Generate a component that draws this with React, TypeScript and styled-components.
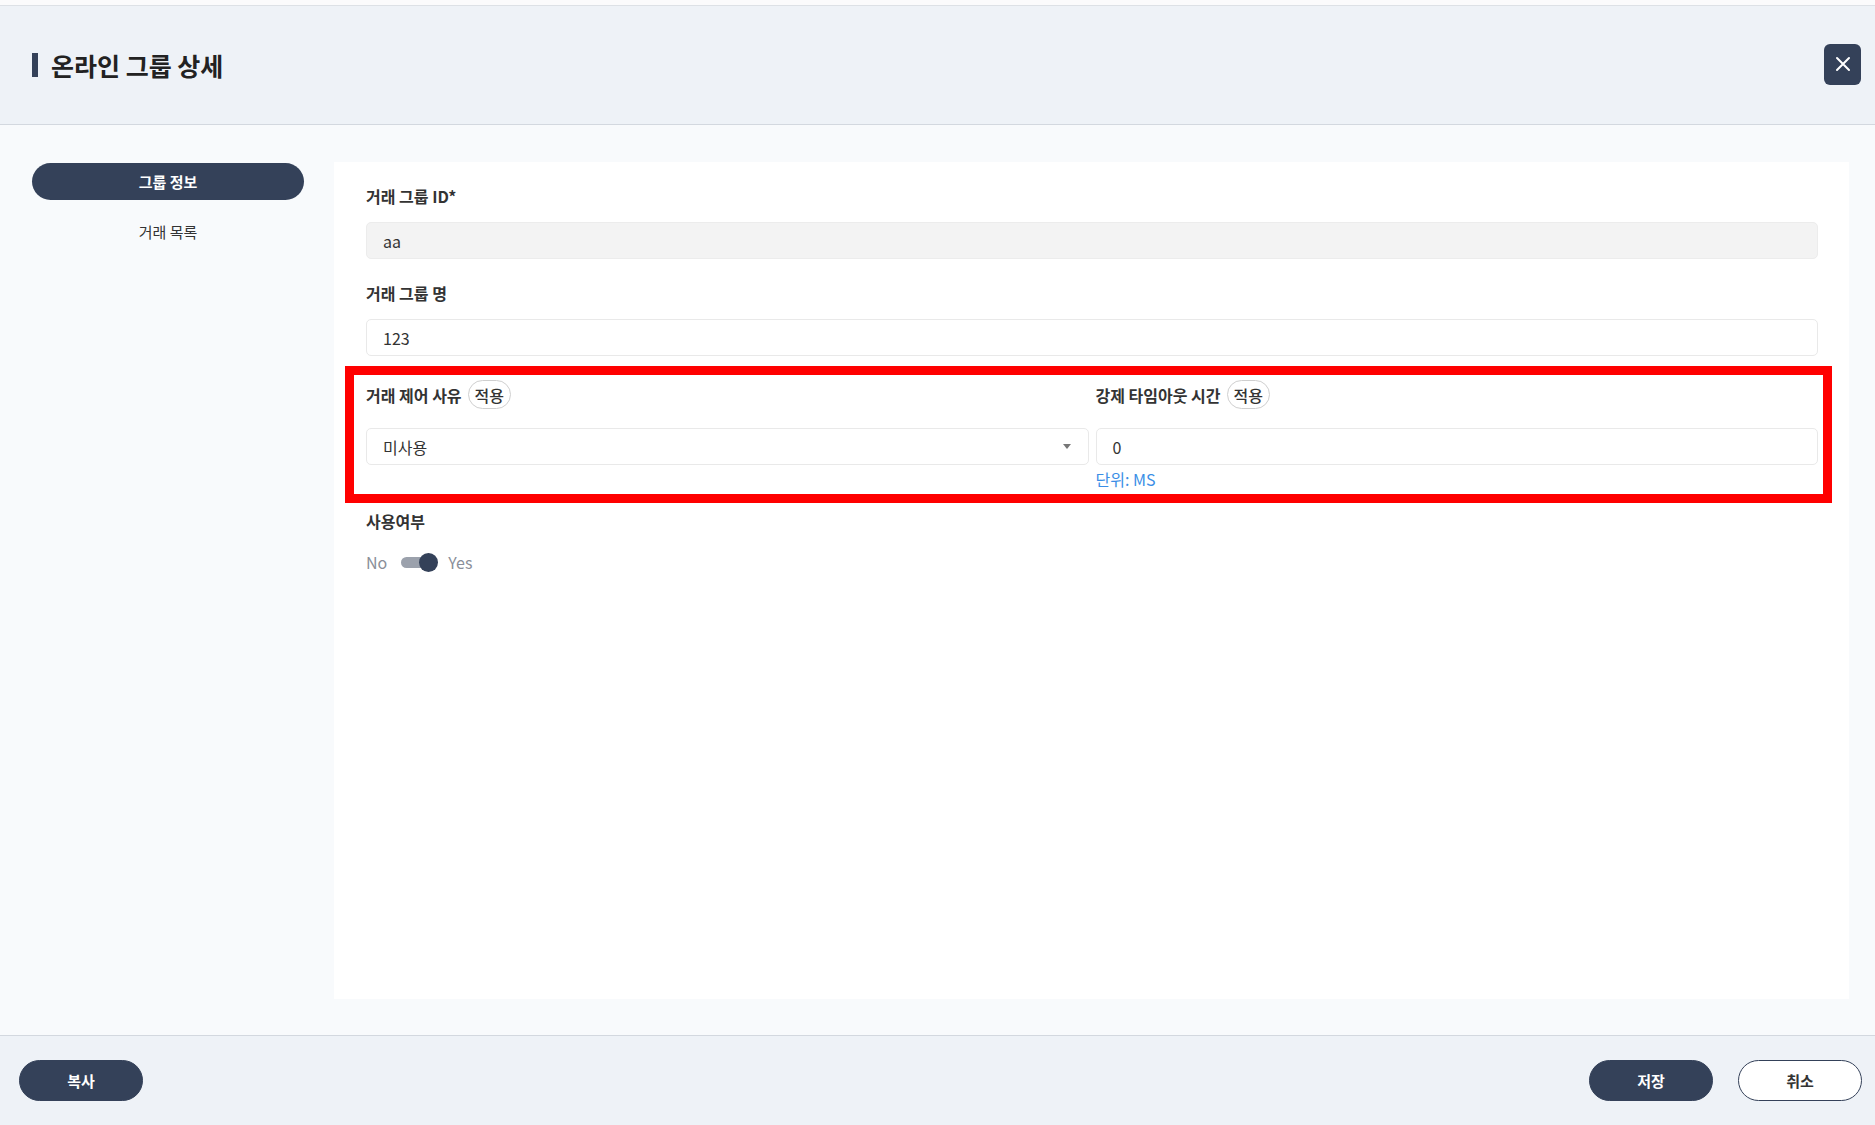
import React, { useState } from "react";
import styled, { createGlobalStyle } from "styled-components";

const NAVY = "#344159";

const GlobalStyle = createGlobalStyle`
  html, body {
    margin: 0;
    padding: 0;
    height: 100%;
  }
  body {
    font-family: "Noto Sans CJK KR", "Noto Sans", sans-serif;
    color: #333;
    background: #fbfbfc;
  }
  * {
    box-sizing: border-box;
  }
`;

// layout
const Page = styled.div`
  height: 100vh;
  display: flex;
  flex-direction: column;
  padding-top: 5px;
`;

const Header = styled.header`
  height: 120px;
  flex-shrink: 0;
  display: flex;
  align-items: center;
  justify-content: space-between;
  padding: 0 14px 0 32px;
  background: #eef2f7;
  border-top: 1px solid #dde1e6;
  border-bottom: 1px solid #d3d8df;
`;

const Title = styled.h1`
  display: flex;
  align-items: center;
  gap: 13px;
  margin: 0;
  font-size: 25px;
  font-weight: 700;
  color: #222;

  &::before {
    content: "";
    width: 6px;
    height: 24px;
    background: ${NAVY};
  }
`;

const CloseButton = styled.button`
  width: 37px;
  height: 41px;
  margin-top: -2px;
  border: none;
  border-radius: 6px;
  background: ${NAVY};
  display: flex;
  align-items: center;
  justify-content: center;
  cursor: pointer;
  padding: 0;
`;

const Main = styled.main`
  flex: 1;
  display: flex;
  gap: 30px;
  padding: 37px 26px 36px 32px;
  background: #f8fafc;
`;

const Sidebar = styled.nav`
  width: 272px;
  flex-shrink: 0;
  display: flex;
  flex-direction: column;
  gap: 13px;
  margin-top: 1px;
`;

const NavItem = styled.button<{ active?: boolean }>`
  height: 37px;
  border: none;
  border-radius: 19px;
  background: ${(p) => (p.active ? NAVY : "transparent")};
  color: ${(p) => (p.active ? "#fff" : "#333")};
  font-family: inherit;
  font-size: 15px;
  font-weight: ${(p) => (p.active ? 700 : 400)};
  cursor: pointer;
`;

const Panel = styled.section`
  flex: 1;
  background: #fff;
  padding: 24px 31px 24px 32px;
  display: flex;
  flex-direction: column;
  gap: 24px;
`;

const Field = styled.div<{ spacing?: number }>`
  display: flex;
  flex-direction: column;
  gap: ${(p) => p.spacing ?? 16}px;
`;

const Label = styled.div`
  display: flex;
  align-items: center;
  gap: 6px;
  font-size: 16px;
  font-weight: 600;
  line-height: 20px;
  color: #333;
  min-height: 20px;
`;

const Badge = styled.span`
  height: 29px;
  padding: 0 6px;
  display: inline-flex;
  align-items: center;
  border: 1px solid #cfcfcf;
  border-radius: 15px;
  font-size: 16px;
  font-weight: 500;
  color: #333;
`;

const Input = styled.div<{ readOnly?: boolean }>`
  height: 37px;
  display: flex;
  align-items: center;
  justify-content: space-between;
  padding: 0 17px 0 16px;
  border: 1px solid ${(p) => (p.readOnly ? "#ececec" : "#e9e9e9")};
  border-radius: 5px;
  background: ${(p) => (p.readOnly ? "#f3f3f3" : "#fff")};
  font-size: 16px;
  color: #333;
`;

const Caret = styled.span`
  width: 0;
  height: 0;
  border-left: 4px solid transparent;
  border-right: 4px solid transparent;
  border-top: 5px solid #777;
`;

const Highlight = styled.div`
  margin: -14px -14px -16px -21px;
  padding: 5px 5px 6px 12px;
  border: 9px solid #ff0000;
`;

const TwoCols = styled.div`
  display: grid;
  grid-template-columns: 1fr 1fr;
  column-gap: 7px;
`;

const Hint = styled.div`
  margin-top: 5px;
  font-size: 16px;
  line-height: 18px;
  color: #3a8ee6;
`;

const ToggleRow = styled.div`
  height: 24px;
  display: flex;
  align-items: center;
  font-size: 16px;
  color: #8a8f99;
`;

const Switch = styled.button<{ on: boolean }>`
  position: relative;
  width: 37px;
  height: 19px;
  margin: 0 10px 0 14px;
  padding: 0;
  border: none;
  background: transparent;
  cursor: pointer;

  &::before {
    content: "";
    position: absolute;
    left: 0;
    top: 4px;
    width: 29px;
    height: 11px;
    border-radius: 6px;
    background: #9ba1ac;
  }

  &::after {
    content: "";
    position: absolute;
    top: 0;
    left: ${(p) => (p.on ? "18px" : "0")};
    width: 19px;
    height: 19px;
    border-radius: 50%;
    background: ${NAVY};
  }
`;

const Footer = styled.footer`
  height: 90px;
  flex-shrink: 0;
  display: flex;
  align-items: center;
  justify-content: space-between;
  padding: 0 13px 0 19px;
  background: #eef2f7;
  border-top: 1px solid #d3d8df;
`;

const Actions = styled.div`
  display: flex;
  gap: 25px;
`;

const PillButton = styled.button<{ outline?: boolean }>`
  width: 124px;
  height: 41px;
  border-radius: 21px;
  border: 1.5px solid ${NAVY};
  background: ${(p) => (p.outline ? "#fff" : NAVY)};
  color: ${(p) => (p.outline ? "#333" : "#fff")};
  font-family: inherit;
  font-size: 15px;
  font-weight: 700;
  cursor: pointer;
`;

export default function App() {
  const [useYn, setUseYn] = useState(true);

  return (
    <>
      <GlobalStyle />
      <Page>
        <Header>
          <Title>온라인 그룹 상세</Title>
          <CloseButton type="button" aria-label="닫기">
            <svg width="16" height="16" viewBox="0 0 16 16">
              <path d="M2 2 L14 14 M14 2 L2 14" stroke="#fff" strokeWidth="2" strokeLinecap="round" />
            </svg>
          </CloseButton>
        </Header>

        <Main>
          <Sidebar>
            <NavItem active>그룹 정보</NavItem>
            <NavItem>거래 목록</NavItem>
          </Sidebar>

          <Panel>
            <Field>
              <Label>거래 그룹 ID*</Label>
              <Input readOnly>aa</Input>
            </Field>

            <Field>
              <Label>거래 그룹 명</Label>
              <Input>123</Input>
            </Field>

            <Highlight>
              <TwoCols>
                <Field spacing={19}>
                  <Label>
                    거래 제어 사유 <Badge>적용</Badge>
                  </Label>
                  <Input>
                    미사용
                    <Caret />
                  </Input>
                </Field>
                <Field spacing={19}>
                  <Label>
                    강제 타임아웃 시간 <Badge>적용</Badge>
                  </Label>
                  <Input>0</Input>
                </Field>
                <div />
                <Hint>단위: MS</Hint>
              </TwoCols>
            </Highlight>

            <Field spacing={19}>
              <Label>사용여부</Label>
              <ToggleRow>
                No
                <Switch type="button" on={useYn} onClick={() => setUseYn(!useYn)} />
                Yes
              </ToggleRow>
            </Field>
          </Panel>
        </Main>

        <Footer>
          <PillButton>복사</PillButton>
          <Actions>
            <PillButton>저장</PillButton>
            <PillButton outline>취소</PillButton>
          </Actions>
        </Footer>
      </Page>
    </>
  );
}
